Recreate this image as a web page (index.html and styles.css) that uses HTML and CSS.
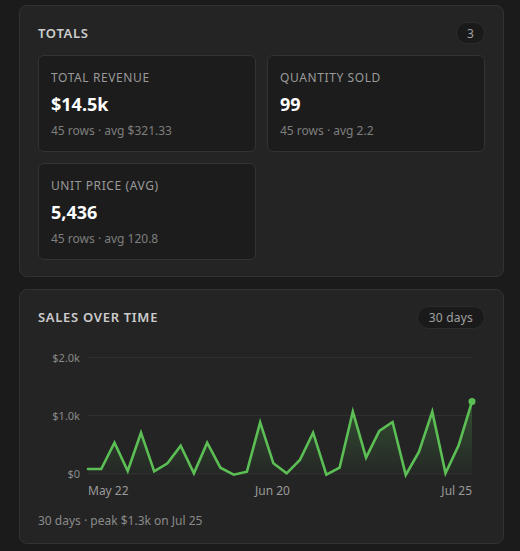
FILE: index.html
```
<!DOCTYPE html>
<html lang="en">
<head>
<meta charset="utf-8">
<title>Dashboard</title>
<link rel="stylesheet" href="styles.css">
</head>
<body>
<main class="page">
  <section class="card">
    <header class="card-head">
      <h2 class="card-title">TOTALS</h2>
      <span class="pill pill-round">3</span>
    </header>
    <div class="stats">
      <div class="stat">
        <div class="stat-label">TOTAL REVENUE</div>
        <div class="stat-value">$14.5k</div>
        <div class="stat-sub">45 rows · avg $321.33</div>
      </div>
      <div class="stat">
        <div class="stat-label">QUANTITY SOLD</div>
        <div class="stat-value">99</div>
        <div class="stat-sub">45 rows · avg 2.2</div>
      </div>
      <div class="stat">
        <div class="stat-label">UNIT PRICE (AVG)</div>
        <div class="stat-value">5,436</div>
        <div class="stat-sub">45 rows · avg 120.8</div>
      </div>
    </div>
  </section>

  <section class="card card-chart">
    <header class="card-head">
      <h2 class="card-title">SALES OVER TIME</h2>
      <span class="pill">30 days</span>
    </header>
    <svg class="chart" width="447" height="155" viewBox="0 0 447 155">
      <defs>
        <linearGradient id="fillGrad" x1="0" y1="0" x2="0" y2="1">
          <stop offset="0" stop-color="#5cbf55" stop-opacity="0.28"/>
          <stop offset="1" stop-color="#5cbf55" stop-opacity="0.02"/>
        </linearGradient>
      </defs>
      <g class="grid">
        <line x1="50" y1="12.5" x2="434" y2="12.5"/>
        <line x1="50" y1="70.5" x2="434" y2="70.5"/>
        <line x1="50" y1="129" x2="434" y2="129"/>
      </g>
      <g class="ylab">
        <text x="42" y="16.5">$2.0k</text>
        <text x="42" y="74.5">$1.0k</text>
        <text x="42" y="132.5">$0</text>
      </g>
      <g class="xlab">
        <text x="50" y="150" text-anchor="start">May 22</text>
        <text x="234.5" y="150" text-anchor="middle">Jun 20</text>
        <text x="434" y="150" text-anchor="end">Jul 25</text>
      </g>
      <path class="area" d="M50,124 L63.24,124 L76.48,97.7 L89.72,126 L102.97,87.7 L116.21,126.3 L129.45,118.3 L142.69,100.7 L155.93,128.3 L169.17,97.7 L182.41,122.7 L195.66,129.7 L208.9,126.7 L222.14,77.3 L235.38,118.3 L248.62,128.3 L261.86,115 L275.1,87.7 L288.34,129.7 L301.59,122.7 L314.83,66.7 L328.07,112.7 L341.31,86 L354.55,77 L367.79,130 L381.03,106.7 L394.28,66.7 L407.52,128.3 L420.76,100 L434,56.7 L434,129 L50,129 Z"/>
      <path class="line" d="M50,124 L63.24,124 L76.48,97.7 L89.72,126 L102.97,87.7 L116.21,126.3 L129.45,118.3 L142.69,100.7 L155.93,128.3 L169.17,97.7 L182.41,122.7 L195.66,129.7 L208.9,126.7 L222.14,77.3 L235.38,118.3 L248.62,128.3 L261.86,115 L275.1,87.7 L288.34,129.7 L301.59,122.7 L314.83,66.7 L328.07,112.7 L341.31,86 L354.55,77 L367.79,130 L381.03,106.7 L394.28,66.7 L407.52,128.3 L420.76,100 L434,56.7"/>
      <circle class="dot" cx="434" cy="56.5" r="3.5"/>
    </svg>
    <p class="chart-foot">30 days · peak $1.3k on Jul 25</p>
  </section>
</main>
</body>
</html>
```
FILE: styles.css
```
* { box-sizing: border-box; }

html, body {
  margin: 0;
  padding: 0;
  background: #1b1b1b;
}

body {
  font-family: "Segoe UI", "Noto Sans", "Open Sans", sans-serif;
  color: #e6e6e6;
}

.page {
  display: flex;
  flex-direction: column;
  gap: 12px;
  width: 485px;
  margin-left: 19px;
  padding-top: 5px;
}

.card {
  background: #242424;
  border: 1px solid #323232;
  border-radius: 8px;
  padding: 16px 18px 16px 18px;
}

.card-chart {
  padding-bottom: 14px;
}

.card-head {
  display: flex;
  align-items: center;
  justify-content: space-between;
  height: 22px;
  margin-bottom: 11px;
}

.card-title {
  margin: 0;
  font-size: 13px;
  font-weight: 600;
  letter-spacing: 0.7px;
  color: #cccccc;
}

.pill {
  display: inline-flex;
  align-items: center;
  justify-content: center;
  height: 23px;
  padding: 0 11px;
  border-radius: 12px;
  background: #1a1a1a;
  border: 1px solid #2c2c2c;
  font-size: 12px;
  letter-spacing: 0.2px;
  color: #a0a0a0;
}

.pill-round {
  height: 22px;
  min-width: 29px;
  padding: 0 8px;
}

.stats {
  display: grid;
  grid-template-columns: 1fr 1fr;
  gap: 11px;
}

.stat {
  background: #1c1c1c;
  border: 1px solid #333333;
  border-radius: 6px;
  padding: 14px 12px 12px 12px;
  height: 97px;
}

.stat-label {
  font-size: 12px;
  line-height: 16px;
  letter-spacing: 0.6px;
  color: #9a9a9a;
}

.stat-value {
  margin-top: 6px;
  font-size: 18px;
  line-height: 24px;
  font-weight: 700;
  color: #ffffff;
}

.stat-sub {
  margin-top: 7px;
  font-size: 12px;
  line-height: 16px;
  color: #7e7e7e;
}

.chart {
  display: block;
  margin-top: 17px;
  overflow: visible;
}

.grid line {
  stroke: #303030;
  stroke-width: 1;
}

.ylab text {
  font-size: 11px;
  fill: #8a8a8a;
  text-anchor: end;
}

.xlab text {
  font-size: 12px;
  fill: #9a9a9a;
}

.area {
  fill: url(#fillGrad);
}

.line {
  fill: none;
  stroke: #5cbf55;
  stroke-width: 2.6;
  stroke-linejoin: miter;
  stroke-linecap: round;
}

.dot {
  fill: #5cbf55;
}

.chart-foot {
  margin: 13px 0 0 0;
  font-size: 12px;
  line-height: 16px;
  color: #8a8a8a;
}
```
